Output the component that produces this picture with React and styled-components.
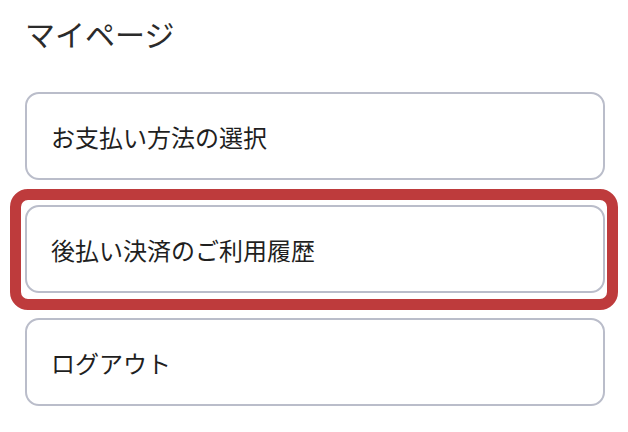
import React from "react";
import styled, { createGlobalStyle } from "styled-components";

const GlobalStyle = createGlobalStyle`
  html, body {
    margin: 0;
    padding: 0;
    background: #ffffff;
  }
  body {
    font-family: "Noto Sans CJK JP", "Noto Sans", sans-serif;
    color: #222;
  }
`;

const Page = styled.div`
  width: 628px;
  height: 432px;
  padding: 12px 23px 0 25px;
  box-sizing: border-box;
  overflow: hidden;
`;

const Title = styled.h1`
  margin: 0;
  font-size: 30px;
  font-weight: 400;
  line-height: 43px;
  color: #2b2b2b;
`;

const Menu = styled.div`
  display: flex;
  flex-direction: column;
  gap: 25px;
  margin-top: 37px;
`;

const Item = styled.div`
  position: relative;
`;

const Card = styled.div`
  height: 88px;
  box-sizing: border-box;
  border: 2px solid #babdca;
  border-radius: 14px;
  display: flex;
  align-items: center;
  padding-left: 24px;
  font-size: 24px;
  color: #1f1f1f;
  background: #fff;
`;

const Highlight = styled.div`
  position: absolute;
  top: -16px;
  bottom: -17px;
  left: -15px;
  right: -13px;
  border: 11px solid #be3b3c;
  border-radius: 18px;
  pointer-events: none;
`;

const items = [
  { label: "お支払い方法の選択" },
  { label: "後払い決済のご利用履歴", marked: true },
  { label: "ログアウト" },
];

const App = () => {
  return (
    <>
      <GlobalStyle />
      <Page>
        <Title>マイページ</Title>
        <Menu>
          {items.map((item) => (
            <Item key={item.label}>
              <Card>{item.label}</Card>
              {item.marked && <Highlight />}
            </Item>
          ))}
        </Menu>
      </Page>
    </>
  );
};

export default App;
